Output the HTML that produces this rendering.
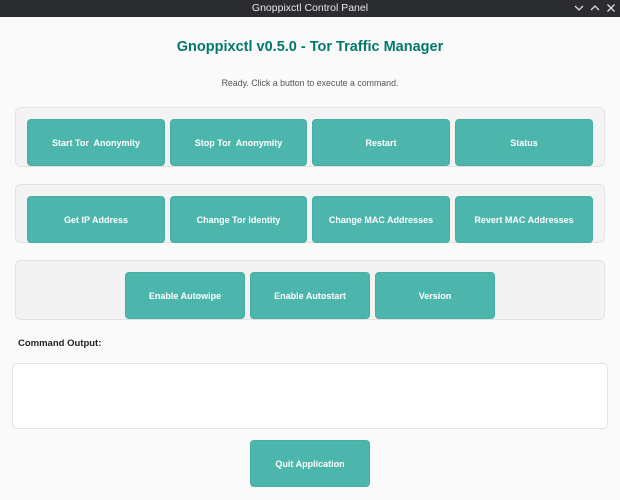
<!DOCTYPE html>
<html><head><meta charset="utf-8"><style>
*{margin:0;padding:0;box-sizing:border-box}
body{width:620px;height:500px;background:#fafafa;font-family:"Liberation Sans",sans-serif;position:relative;overflow:hidden}
.tb{position:absolute;left:0;top:0;width:620px;height:17px;background:#2b2c30;color:#e8e8e8;font-size:10.5px;text-align:center;line-height:16px}
.tb svg{position:absolute;top:4px}
h1{position:absolute;top:39px;left:0;width:620px;text-align:center;font-size:14.5px;color:#00796b;font-weight:bold}
.st{position:absolute;top:78px;left:0;width:620px;text-align:center;font-size:8.8px;color:#555}
.fr{position:absolute;left:15px;width:590px;background:#f3f3f3;border:1px solid #e2e2e2;border-radius:6px}
.b{position:absolute;background:#4db6ac;border:1px solid #45ada3;border-radius:4px;color:#fff;font-weight:bold;font-size:9px;display:flex;align-items:center;justify-content:center}
.lbl{position:absolute;left:18px;top:338px;font-size:9.5px;font-weight:bold;color:#222}
.ta{position:absolute;left:12px;top:363px;width:596px;height:66px;background:#fff;border:1px solid #e2e2e2;border-radius:5px}
</style></head><body>
<div class="tb">Gnoppixctl Control Panel
<svg style="left:574px" width="10" height="8"><path d="M1 2L5 6L9 2" stroke="#ddd" fill="none" stroke-width="1.3"/></svg>
<svg style="left:590px" width="10" height="8"><path d="M1 6L5 2L9 6" stroke="#ddd" fill="none" stroke-width="1.3"/></svg>
<svg style="left:606px" width="10" height="8"><path d="M1.5 0.5L8.5 7.5M8.5 0.5L1.5 7.5" stroke="#ddd" fill="none" stroke-width="1.3"/></svg>
</div>
<h1>Gnoppixctl v0.5.0 - Tor Traffic Manager</h1>
<div class="st">Ready. Click a button to execute a command.</div>
<div class="fr" style="top:107px;height:60px"></div>
<div class="b" style="left:27px;top:119px;width:138px;height:47px">Start Tor&nbsp; Anonymity</div>
<div class="b" style="left:170px;top:119px;width:137px;height:47px">Stop Tor&nbsp; Anonymity</div>
<div class="b" style="left:312px;top:119px;width:138px;height:47px">Restart</div>
<div class="b" style="left:455px;top:119px;width:138px;height:47px">Status</div>
<div class="fr" style="top:184px;height:59px"></div>
<div class="b" style="left:27px;top:196px;width:138px;height:47px">Get IP Address</div>
<div class="b" style="left:170px;top:196px;width:137px;height:47px">Change Tor Identity</div>
<div class="b" style="left:312px;top:196px;width:138px;height:47px">Change MAC Addresses</div>
<div class="b" style="left:455px;top:196px;width:138px;height:47px">Revert MAC Addresses</div>
<div class="fr" style="top:260px;height:60px"></div>
<div class="b" style="left:125px;top:272px;width:120px;height:47px">Enable Autowipe</div>
<div class="b" style="left:250px;top:272px;width:120px;height:47px">Enable Autostart</div>
<div class="b" style="left:375px;top:272px;width:120px;height:47px">Version</div>
<div class="lbl">Command Output:</div>
<div class="ta"></div>
<div class="b" style="left:250px;top:440px;width:120px;height:47px">Quit Application</div>
</body></html>
